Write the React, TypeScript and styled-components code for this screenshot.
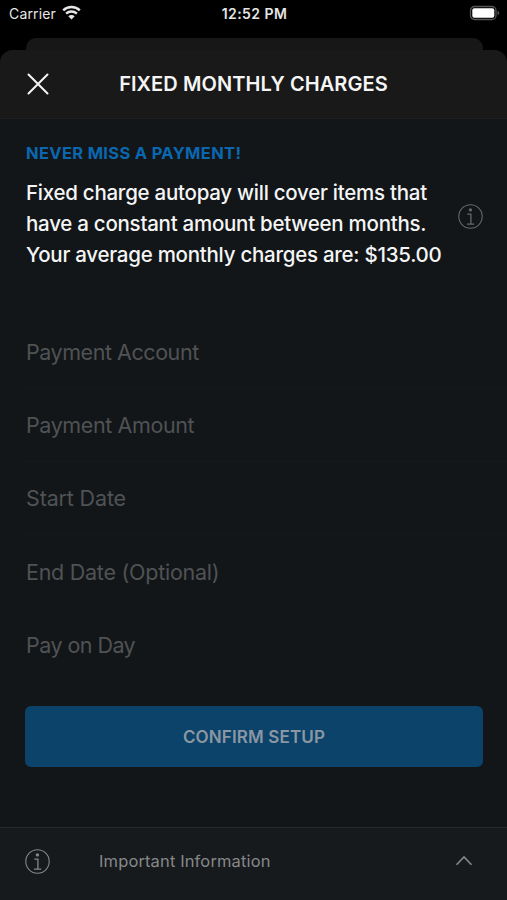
import React from "react";
import styled, { createGlobalStyle } from "styled-components";

const GlobalStyle = createGlobalStyle`
  * { box-sizing: border-box; }
  body { margin: 0; background: #000; }
`;

const Screen = styled.main`
  width: 507px;
  height: 900px;
  display: flex;
  flex-direction: column;
  overflow: hidden;
  background: #000;
  color: #f5f5f5;
  font-family: Inter, "Liberation Sans", sans-serif;
`;

const StatusBar = styled.div`
  height: 38px;
  flex: none;
  display: grid;
  grid-template-columns: 1fr auto 1fr;
  align-items: start;
  padding: 5px 7px 0 9px;
  font-size: 14px;
  line-height: 18px;
  color: #e6e6e6;
`;

const Carrier = styled.div`
  display: flex;
  gap: 6px;
  letter-spacing: 0.15px;
`;

const Clock = styled.div`
  font-weight: 600;
  letter-spacing: 0.45px;
`;

const BatterySlot = styled.div`
  display: flex;
  justify-content: flex-end;
`;

const BackSheet = styled.div`
  height: 12px;
  flex: none;
  margin: 0 24px 0 26px;
  border-radius: 10px 10px 0 0;
  background: #171717;
`;

const Sheet = styled.section`
  flex: 1;
  min-height: 0;
  display: flex;
  flex-direction: column;
  border-radius: 13px 13px 0 0;
  overflow: hidden;
  background: #121619;
`;

const Header = styled.header`
  height: 69px;
  flex: none;
  display: grid;
  grid-template-columns: 76px 1fr 76px;
  align-items: center;
  background: #191919;
  border-bottom: 1px solid #1d1f20;
`;

const IconButton = styled.button`
  display: flex;
  justify-content: center;
  padding: 0;
  border: 0;
  background: none;
  color: #f5f5f5;
`;

const Title = styled.h1`
  margin: 0;
  text-align: center;
  font-size: 20px;
  font-weight: 600;
  line-height: 24px;
  letter-spacing: 0.08px;
  white-space: nowrap;
`;

const Intro = styled.div`
  height: 196px;
  flex: none;
  padding: 24px 24px 0 26px;
`;

const Eyebrow = styled.h2`
  margin: 0 0 14px;
  color: #0a67b0;
  font-size: 16.5px;
  font-weight: 700;
  line-height: 21px;
  letter-spacing: 0.33px;
`;

const IntroRow = styled.div`
  display: flex;
  justify-content: space-between;
`;

const Message = styled.p`
  margin: 0;
  font-size: 20.5px;
  font-weight: 500;
  line-height: 30.8px;
  letter-spacing: -0.26px;
  white-space: nowrap;
`;

const InfoSlot = styled.div`
  padding-top: 26px;
  color: #66696b;
`;

const Field = styled.div<{ $line?: boolean; $tracking: number }>`
  height: 73.3px;
  flex: none;
  display: flex;
  align-items: center;
  padding-top: 1px;
  margin-left: 26px;
  border-bottom: 1px solid ${(p) => (p.$line ? "#15191b" : "transparent")};
  color: #505254;
  font-size: 21.5px;
  line-height: 28px;
  letter-spacing: ${(p) => p.$tracking}px;
`;

const Confirm = styled.button`
  height: 61px;
  flex: none;
  margin: 25px 24px 0 25px;
  padding: 0;
  border: 0;
  border-radius: 6px;
  background: #0b436b;
  color: #8b97a2;
  font: inherit;
  font-size: 17px;
  font-weight: 600;
  letter-spacing: 0.15px;
`;

const Footer = styled.footer`
  height: 73px;
  flex: none;
  margin-top: auto;
  display: grid;
  grid-template-columns: 74px 1fr 28px;
  align-items: center;
  padding: 0 24px 6px 25px;
  border-top: 1px solid #25282a;
  background: #171a1d;
  color: #85888a;
  font-size: 16.5px;
  letter-spacing: 0.13px;
`;

const Icon = styled.svg`
  display: block;
  flex: none;
  fill: none;
  stroke: currentColor;
`;

function InfoIcon() {
  return (
    <Icon width="25" height="25" viewBox="0 0 25 25">
      <circle cx="12.5" cy="12.5" r="11.7" strokeWidth="1.1" />
      <circle cx="12.4" cy="5.9" r="1.7" fill="currentColor" stroke="none" />
      <path d="M9.3 10.1h3.6v9.9M9 20.2h7.2" strokeWidth="1.3" />
    </Icon>
  );
}

const fields = [
  { label: "Payment Account", line: true, tracking: -0.45 },
  { label: "Payment Amount", line: true, tracking: -0.4 },
  { label: "Start Date", line: true, tracking: -0.15 },
  { label: "End Date (Optional)", line: false, tracking: -0.26 },
  { label: "Pay on Day", line: false, tracking: -0.55 },
];

export default function App() {
  return (
    <>
      <GlobalStyle />
      <Screen>
        <StatusBar>
          <Carrier>
            <span>Carrier</span>
            <Icon width="19" height="15" viewBox="0 0 19 15" strokeWidth="2.4">
              <path d="M1.2 5.4C5.8.9 13.2.9 17.8 5.4M4.1 8.6c3-2.8 7.8-2.8 10.8 0" />
              <path d="M6.3 11.2c1.8-1.5 4.6-1.5 6.4 0L9.5 14.6z" fill="currentColor" stroke="none" />
            </Icon>
          </Carrier>
          <Clock>12:52 PM</Clock>
          <BatterySlot>
            <Icon width="31" height="17" viewBox="0 0 31 17">
              <rect x="1.5" y="1.5" width="25.5" height="13" rx="4" stroke="#555" strokeWidth="1.3" />
              <rect x="3.3" y="3.3" width="22" height="9.4" rx="2" fill="#fff" stroke="none" />
              <path d="M28.5 5.8c2.4.9 2.4 3.5 0 4.4z" fill="#555" stroke="none" />
            </Icon>
          </BatterySlot>
        </StatusBar>
        <BackSheet />
        <Sheet>
          <Header>
            <IconButton aria-label="Close">
              <Icon width="22" height="22" viewBox="0 0 22 22" strokeWidth="2" strokeLinecap="round">
                <path d="M1.5 1.5l19 19M20.5 1.5l-19 19" />
              </Icon>
            </IconButton>
            <Title>FIXED MONTHLY CHARGES</Title>
          </Header>
          <Intro>
            <Eyebrow>NEVER MISS A PAYMENT!</Eyebrow>
            <IntroRow>
              <Message>
                Fixed charge autopay will cover items that
                <br />
                have a constant amount between months.
                <br />
                Your average monthly charges are: $135.00
              </Message>
              <InfoSlot>
                <InfoIcon />
              </InfoSlot>
            </IntroRow>
          </Intro>
          {fields.map((f) => (
            <Field key={f.label} $line={f.line} $tracking={f.tracking}>
              {f.label}
            </Field>
          ))}
          <Confirm>CONFIRM SETUP</Confirm>
          <Footer>
            <InfoIcon />
            <span>Important Information</span>
            <Icon width="18" height="12" viewBox="0 0 18 12" strokeWidth="1.6">
              <path d="M1.5 9.8L9 2l7.5 7.8" />
            </Icon>
          </Footer>
        </Sheet>
      </Screen>
    </>
  );
}
